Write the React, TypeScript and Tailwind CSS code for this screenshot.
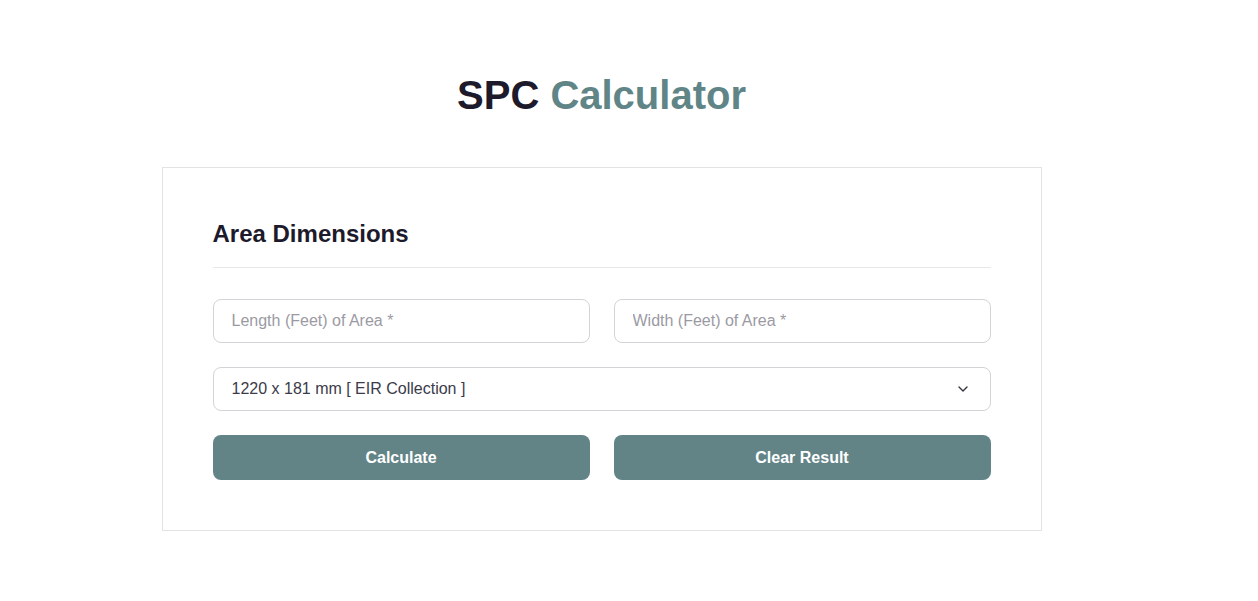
import React from 'react';
import { ChevronDown } from 'lucide-react';

export default function App() {
  return (
    <div className="min-h-screen bg-white font-['Liberation_Sans',Arial,sans-serif]">
      <div className="w-[1203px] flex flex-col items-center pt-[71px]">
        <h1 className="text-[40px] leading-[48px] font-bold text-[#1c1a2b]">
          SPC <span className="text-[#5f8587]">Calculator</span>
        </h1>

        <div className="mt-[48px] w-[880px] border border-[#e3e3e3] px-[50px] pt-[49px] pb-[50px]">
          <h2 className="text-[24px] leading-[34px] font-bold text-[#1c1a2b] pb-[16px] border-b border-[#e8e8e8]">
            Area Dimensions
          </h2>

          <div className="mt-[31px] grid grid-cols-2 gap-x-[24px] gap-y-[24px]">
            <input
              type="text"
              placeholder="Length (Feet) of Area *"
              className="h-[44px] rounded-lg border border-[#d4d4d8] px-[18px] text-[16px] text-[#3b3b4a] placeholder:text-[#9b9aa3] outline-none"
            />
            <input
              type="text"
              placeholder="Width (Feet) of Area *"
              className="h-[44px] rounded-lg border border-[#d4d4d8] px-[18px] text-[16px] text-[#3b3b4a] placeholder:text-[#9b9aa3] outline-none"
            />

            <div className="col-span-2 h-[44px] rounded-lg border border-[#d4d4d8] px-[18px] flex items-center justify-between text-[16px] text-[#3b3b4a]">
              <span>1220 x 181 mm [ EIR Collection ]</span>
              <ChevronDown className="h-4 w-4 mr-[1px] text-[#333340]" strokeWidth={2} />
            </div>

            <button
              type="button"
              className="h-[45px] rounded-lg bg-[#628487] text-white text-[16px] font-bold"
            >
              Calculate
            </button>
            <button
              type="button"
              className="h-[45px] rounded-lg bg-[#628487] text-white text-[16px] font-bold"
            >
              Clear Result
            </button>
          </div>
        </div>
      </div>
    </div>
  );
}
